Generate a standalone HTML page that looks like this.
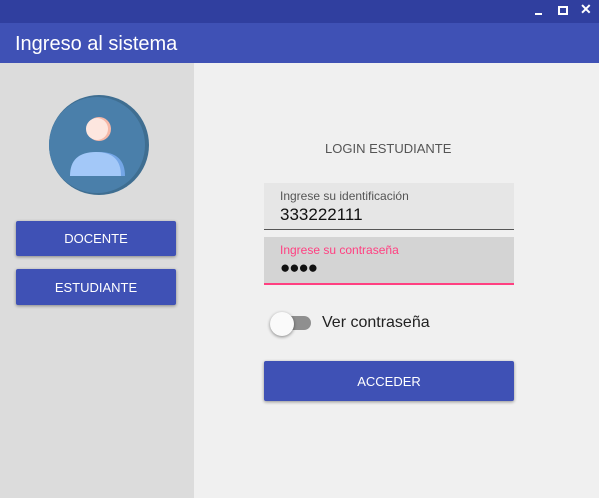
<!DOCTYPE html>
<html><head><style>
*{margin:0;padding:0;box-sizing:border-box}
body{width:599px;height:498px;overflow:hidden;font-family:"Liberation Sans",sans-serif;background:#f0f0f0;position:relative}
.tb{position:absolute;left:0;top:0;width:599px;height:23px;background:#303f9f}
.hd{position:absolute;left:0;top:23px;width:599px;height:40px;background:#3f51b5;color:#fff;font-size:20px;line-height:42px;padding-left:15px}
.side{position:absolute;left:0;top:63px;width:194px;height:435px;background:#dcdcdc}
.btn{position:absolute;background:#3f51b5;color:#fff;font-size:13px;text-align:center;border-radius:2px;box-shadow:0 1px 3px rgba(0,0,0,.4)}
.f{position:absolute;left:264px;width:250px;height:47px}
.lab{position:absolute;left:16px;top:6px;font-size:12px}
.val{position:absolute;left:16px;top:22px;font-size:17px;color:#111}
</style></head><body>
<div class="tb">
<div style="position:absolute;left:535px;top:13px;width:7px;height:2px;background:#fff"></div>
<div style="position:absolute;left:558px;top:6px;width:10px;height:9px;border:2px solid #fff"></div>
<div style="position:absolute;left:580px;top:1px;color:#fff;font-size:14px;font-weight:bold">✕</div>
</div>
<div class="hd">Ingreso al sistema</div>
<div class="side">
<svg style="position:absolute;left:49px;top:32px" width="100" height="100" viewBox="0 0 100 100">
<circle cx="50" cy="50" r="50" fill="#3f6e91"/><circle cx="48" cy="50" r="48" fill="#4a7faa"/>
<circle cx="50" cy="34" r="12" fill="#f6b8a8"/><circle cx="48" cy="34" r="11" fill="#fde6df"/>
<path d="M24 81 Q24 57 50 57 Q76 57 76 81Z" fill="#74a6e6"/><path d="M21 81 Q21 57 47 57 Q72 57 72 81Z" fill="#a3c8f8"/>
</svg>
<div class="btn" style="left:16px;top:158px;width:160px;height:35px;line-height:36px">DOCENTE</div>
<div class="btn" style="left:16px;top:206px;width:160px;height:36px;line-height:37px">ESTUDIANTE</div>
</div>
<div style="position:absolute;left:325px;top:141px;font-size:13px;color:#555">LOGIN ESTUDIANTE</div>
<div class="f" style="top:183px;background:#e6e6e6;border-bottom:1px solid #555"><div class="lab" style="color:#555">Ingrese su identificación</div><div class="val">333222111</div></div>
<div class="f" style="top:237px;height:48px;background:#d4d4d4;border-bottom:2px solid #ff4081"><div class="lab" style="color:#ff4081">Ingrese su contraseña</div><div class="val" style="font-size:17px;top:21px;letter-spacing:-1px">●●●●</div></div>
<div style="position:absolute;left:274px;top:316px;width:37px;height:14px;border-radius:7px;background:#8f8f8f"></div>
<div style="position:absolute;left:270px;top:312px;width:24px;height:24px;border-radius:50%;background:#fafafa;box-shadow:0 1px 3px rgba(0,0,0,.45)"></div>
<div style="position:absolute;left:322px;top:314px;font-size:16px;color:#222">Ver contraseña</div>
<div class="btn" style="left:264px;top:361px;width:250px;height:40px;line-height:41px">ACCEDER</div>
</body></html>
